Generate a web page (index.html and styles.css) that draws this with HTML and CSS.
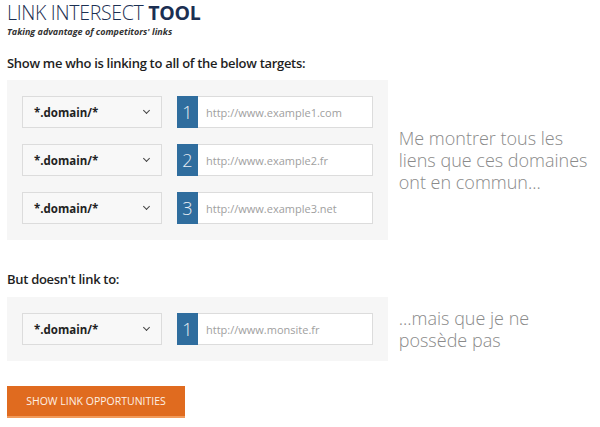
FILE: index.html
```html
<!DOCTYPE html>
<html lang="en">
<head>
    <meta charset="UTF-8">
    <title>Link Intersect Tool</title>
    <link rel="stylesheet" href="styles.css">
</head>
<body>

    <div class="page">
        <h1 class="title">LINK INTERSECT <b>TOOL</b></h1>
        <p class="subtitle">Taking advantage of competitors' links</p>

        <h2 class="label">Show me who is linking to all of the below targets:</h2>
        <div class="section">
            <div class="panel">
                <div class="row">
                    <div class="select">*.domain/* <span class="chevron"></span></div>
                    <div class="target"><span class="num">1</span><input type="text" placeholder="http://www.example1.com"></div>
                </div>
                <div class="row">
                    <div class="select">*.domain/* <span class="chevron"></span></div>
                    <div class="target"><span class="num">2</span><input type="text" placeholder="http://www.example2.fr"></div>
                </div>
                <div class="row">
                    <div class="select">*.domain/* <span class="chevron"></span></div>
                    <div class="target"><span class="num">3</span><input type="text" placeholder="http://www.example3.net"></div>
                </div>
            </div>
            <p class="note">Me montrer tous les liens que ces domaines ont en commun...</p>
        </div>

        <h2 class="label second">But doesn't link to:</h2>
        <div class="section">
            <div class="panel">
                <div class="row">
                    <div class="select">*.domain/* <span class="chevron"></span></div>
                    <div class="target"><span class="num">1</span><input type="text" placeholder="http://www.monsite.fr"></div>
                </div>
            </div>
            <p class="note">...mais que je ne possède pas</p>
        </div>

        <button class="submit">SHOW LINK OPPORTUNITIES</button>
    </div>

</body>
</html>
```

FILE: styles.css
```css
* {
    margin: 0;
    padding: 0;
    box-sizing: border-box;
}

body {
    font-family: 'Open Sans', sans-serif;
    background-color: #fff;
    color: #222;
}

.page {
    padding: 2px 7px 0;
}

.title {
    font-size: 19.5px;
    font-weight: 300;
    line-height: 22px;
    color: #1b2f52;
    letter-spacing: -0.3px;
}

.title b {
    font-weight: 700;
}

.subtitle {
    margin-top: 2px;
    font-size: 9px;
    font-weight: 700;
    font-style: italic;
    line-height: 12px;
    color: #333;
}

.label {
    font-size: 13px;
    font-weight: 600;
    line-height: 18px;
    letter-spacing: -0.3px;
    margin-top: 16px;
    margin-bottom: 8px;
    color: #1e1e1e;
}

.label.second {
    margin-top: 30px;
    margin-bottom: 9px;
}

.section {
    display: flex;
    align-items: center;
}

.panel {
    width: 382px;
    background-color: #f6f6f6;
    padding: 16px 15px;
    display: flex;
    flex-direction: column;
    gap: 16px;
}

.row {
    display: flex;
    gap: 15px;
    height: 32px;
}

.select {
    width: 140px;
    display: flex;
    align-items: center;
    justify-content: space-between;
    padding: 0 12px 0 11px;
    background-color: #f8f8f8;
    border: 1px solid #dcdcdc;
    font-size: 11.5px;
    font-weight: 700;
    color: #222;
}

.chevron {
    width: 5px;
    height: 5px;
    border-right: 1.2px solid #444;
    border-bottom: 1.2px solid #444;
    transform: rotate(45deg);
    margin-top: -3px;
}

.target {
    flex: 1;
    display: flex;
    background-color: #fff;
    border: 1px solid #dcdcdc;
}

.num {
    width: 21px;
    margin: -1px 0 -1px -1px;
    background-color: #2f6d9e;
    color: #e8eef4;
    font-size: 18px;
    font-weight: 300;
    display: flex;
    align-items: center;
    justify-content: center;
}

.target input {
    flex: 1;
    border: none;
    outline: none;
    padding-left: 8px;
    font-family: 'Open Sans', sans-serif;
    font-size: 11px;
    color: #333;
    background: transparent;
}

.target input::placeholder {
    color: #a0a0a0;
}

.note {
    width: 195px;
    margin-left: 11px;
    font-size: 18px;
    font-weight: 300;
    line-height: 22px;
    color: #8a8a8a;
}

.submit {
    margin-top: 25px;
    width: 178px;
    height: 32px;
    background-color: #e06b1f;
    border: none;
    border-bottom: 2px solid #f29a5a;
    color: #fdf0e6;
    font-family: 'Open Sans', sans-serif;
    font-size: 10.5px;
    cursor: pointer;
}
```
